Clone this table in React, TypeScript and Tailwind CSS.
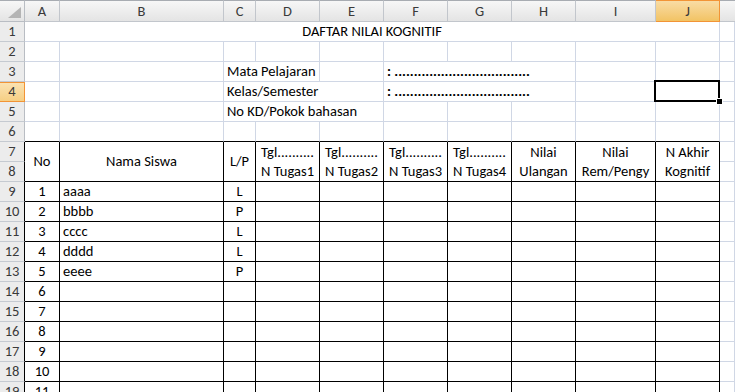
import type { ReactNode } from "react";

// Worksheet: score sheet for cognitive marks
const COLS = ["A", "B", "C", "D", "E", "F", "G", "H", "I", "J"];

const students = [
  { no: 1, name: "aaaa", sex: "L" },
  { no: 2, name: "bbbb", sex: "P" },
  { no: 3, name: "cccc", sex: "L" },
  { no: 4, name: "dddd", sex: "L" },
  { no: 5, name: "eeee", sex: "P" },
  { no: 6, name: "", sex: "" },
  { no: 7, name: "", sex: "" },
  { no: 8, name: "", sex: "" },
  { no: 9, name: "", sex: "" },
  { no: 10, name: "", sex: "" },
  { no: 11, name: "", sex: "" },
];

const DOTS = ": " + ".".repeat(35);

function Cell({
  className = "",
  dark = false,
  darkBottom = false,
  children,
}: {
  className?: string;
  dark?: boolean;
  darkBottom?: boolean;
  children?: ReactNode;
}) {
  const borders = dark
    ? "border-black"
    : darkBottom
      ? "border-r-[#d0d7e5] border-b-black"
      : "border-[#d0d7e5]";
  return (
    <div className={`border-r border-b ${borders} flex items-center whitespace-nowrap overflow-hidden ${className}`}>
      {children}
    </div>
  );
}

function RowHead({ n, active = false, dark = false }: { n: number; active?: boolean; dark?: boolean }) {
  if (active) {
    return (
      <div className="flex items-center justify-center border-r border-b border-[#f29436] bg-gradient-to-b from-[#fbe3b4] to-[#f6cf84] shadow-[inset_0_1px_0_#f29436] text-[#3a3a3a]">
        {n}
      </div>
    );
  }
  return (
    <div
      className={`flex items-center justify-center border-b border-[#c5cad1] border-r bg-[#ececec] text-[#3a3a3a] ${dark ? "border-r-black" : "border-r-[#b9bdc3]"}`}
    >
      {n}
    </div>
  );
}

function Blank({ count, dark = false, darkBottom = false }: { count: number; dark?: boolean; darkBottom?: boolean }) {
  return (
    <>
      {Array.from({ length: count }).map((_, i) => (
        <Cell key={i} dark={dark} darkBottom={darkBottom} />
      ))}
    </>
  );
}

export default function App() {
  return (
    <div className="h-[392px] w-[735px] overflow-hidden bg-white text-[14.5px] leading-none text-black font-['Carlito','Lato','Noto_Sans',sans-serif]">
      <div className="grid grid-cols-[25px_35px_164px_32px_64px_64px_64px_64px_64px_80px_64px_1fr] grid-rows-[22px_repeat(19,20px)]">
        {/* column headers */}
        <div className="relative border-t border-t-[#a8acb2] border-r border-b border-[#b9bdc3] bg-gradient-to-b from-[#f7f7f7] to-[#e4e4e4]">
          <svg className="absolute right-[3px] bottom-[3px]" width="13" height="11" viewBox="0 0 13 11">
            <polygon points="13,0 13,11 0,11" fill="#b4b4b4" />
          </svg>
        </div>
        {COLS.map((c) =>
          c === "J" ? (
            <div
              key={c}
              className="flex items-center justify-center border-t border-r border-b border-[#f29436] bg-gradient-to-b from-[#f9dca4] to-[#f2c363] text-[#3a3a3a]"
            >
              {c}
            </div>
          ) : (
            <div
              key={c}
              className="flex items-center justify-center border-t border-t-[#a8acb2] border-r border-b border-[#c2c6cc] bg-gradient-to-b from-[#f7f7f7] to-[#e4e4e4] text-[#3a3a3a]"
            >
              {c}
            </div>
          ),
        )}
        <div className="border-t border-t-[#a8acb2] border-b border-[#c2c6cc] bg-gradient-to-b from-[#f7f7f7] to-[#e4e4e4]" />

        {/* row 1: title */}
        <RowHead n={1} />
        <Cell className="col-span-10 justify-center">DAFTAR NILAI KOGNITIF</Cell>
        <Cell />

        {/* row 2 */}
        <RowHead n={2} />
        <Blank count={11} />

        {/* row 3 */}
        <RowHead n={3} />
        <Blank count={2} />
        <Cell className="col-span-2 pl-[3px]">Mata Pelajaran</Cell>
        <Cell />
        <Cell className="col-span-3 pl-[3px] font-bold">{DOTS}</Cell>
        <Blank count={3} />

        {/* row 4 */}
        <RowHead n={4} active />
        <Blank count={2} />
        <Cell className="col-span-3 pl-[3px]">Kelas/Semester</Cell>
        <Cell className="col-span-3 pl-[3px] font-bold">{DOTS}</Cell>
        <Cell />
        <div className="relative border-r border-b border-[#d0d7e5]">
          <div className="absolute -left-[2px] -top-[2px] -right-[1px] -bottom-[1px] z-10 border-2 border-black" />
          <div className="absolute -right-[4px] -bottom-[4px] z-20 h-[7px] w-[7px] border border-white bg-black" />
        </div>
        <Cell />

        {/* row 5 */}
        <RowHead n={5} />
        <Blank count={2} />
        <Cell className="col-span-3 pl-[3px]">No KD/Pokok bahasan</Cell>
        <Blank count={6} />

        {/* row 6: top edge of the table */}
        <RowHead n={6} />
        <Blank count={10} darkBottom />
        <Cell />

        {/* rows 7-8: table heading */}
        <RowHead n={7} dark />
        <Cell dark className="row-span-2 justify-center">No</Cell>
        <Cell dark className="row-span-2 justify-center">Nama Siswa</Cell>
        <Cell dark className="row-span-2 justify-center">L/P</Cell>
        {[1, 2, 3, 4].map((n) => (
          <Cell key={n} dark className="row-span-2 flex-col justify-center">
            <div className="flex h-[20px] items-center">Tgl..........</div>
            <div className="flex h-[20px] items-center">N Tugas{n}</div>
          </Cell>
        ))}
        <Cell dark className="row-span-2 flex-col justify-center">
          <div className="flex h-[20px] items-center">Nilai</div>
          <div className="flex h-[20px] items-center">Ulangan</div>
        </Cell>
        <Cell dark className="row-span-2 flex-col justify-center">
          <div className="flex h-[20px] items-center">Nilai</div>
          <div className="flex h-[20px] items-center">Rem/Pengy</div>
        </Cell>
        <Cell dark className="row-span-2 flex-col justify-center">
          <div className="flex h-[20px] items-center">N Akhir</div>
          <div className="flex h-[20px] items-center">Kognitif</div>
        </Cell>
        <Cell />
        <RowHead n={8} dark />
        <Cell />

        {/* student rows */}
        {students.map((s, i) => (
          <div key={s.no} className="contents">
            <RowHead n={9 + i} dark />
            <Cell dark className="justify-center">{s.no}</Cell>
            <Cell dark className="pl-[3px]">{s.name}</Cell>
            <Cell dark className="justify-center">{s.sex}</Cell>
            <Blank count={7} dark />
            <Cell />
          </div>
        ))}
      </div>
    </div>
  );
}
